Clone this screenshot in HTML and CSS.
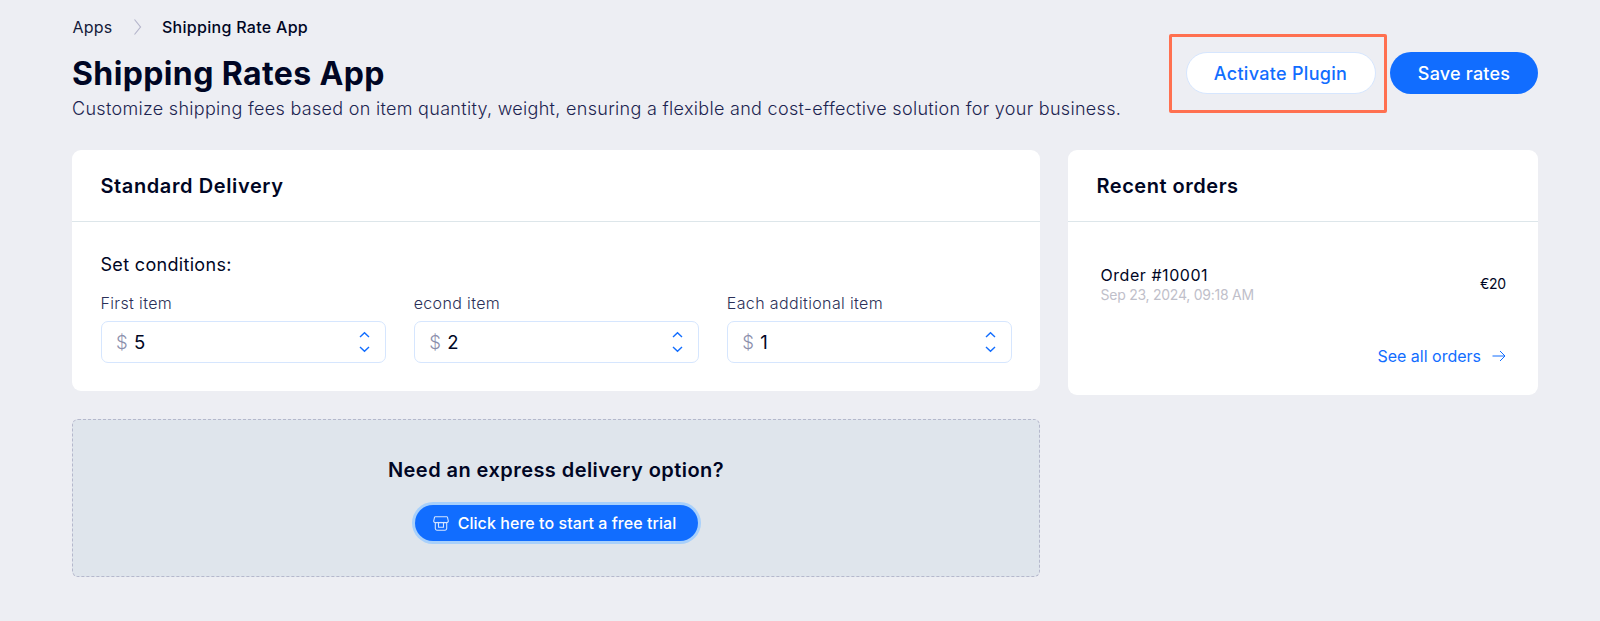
FILE: index.html
```
<!DOCTYPE html>
<html lang="en">
<head>
<meta charset="utf-8">
<title>Shipping Rates App</title>
<link rel="stylesheet" href="styles.css">
</head>
<body>
<main class="page">
  <header class="header">
    <div class="intro">
      <nav class="crumbs">
        <span class="crumb">Apps</span>
        <svg class="crumb-sep" width="9" height="18" viewBox="0 0 9 18"><path d="M1.500 1.500 7.500 9 1.500 16.500"/></svg>
        <span class="crumb-current">Shipping Rate App</span>
      </nav>
      <h1 class="title">Shipping Rates App</h1>
      <p class="subtitle">Customize shipping fees based on item quantity, weight, ensuring a flexible and cost-effective solution for your business.</p>
    </div>
    <div class="actions">
      <div class="highlight"><button class="btn btn-secondary">Activate Plugin</button></div>
      <button class="btn btn-primary">Save rates</button>
    </div>
  </header>

  <div class="columns">
    <div class="main-col">
      <section class="card">
        <h2 class="card-title standard">Standard Delivery</h2>
        <div class="conditions">
          <p class="conditions-title">Set conditions:</p>
          <div class="fields">
            <div class="field">
              <span class="label">First item</span>
              <div class="input"><span class="currency">$</span><span class="value">5</span>
                <svg class="stepper" width="11" height="22" viewBox="0 0 11 22"><path d="M1 6 5.500 1.700 10 6M1 16 5.500 20.300 10 16"/></svg></div>
            </div>
            <div class="field">
              <span class="label">econd item</span>
              <div class="input"><span class="currency">$</span><span class="value">2</span>
                <svg class="stepper" width="11" height="22" viewBox="0 0 11 22"><path d="M1 6 5.500 1.700 10 6M1 16 5.500 20.300 10 16"/></svg></div>
            </div>
            <div class="field">
              <span class="label">Each additional item</span>
              <div class="input"><span class="currency">$</span><span class="value">1</span>
                <svg class="stepper" width="11" height="22" viewBox="0 0 11 22"><path d="M1 6 5.500 1.700 10 6M1 16 5.500 20.300 10 16"/></svg></div>
            </div>
          </div>
        </div>
      </section>
      <section class="promo">
        <h2 class="promo-title">Need an express delivery option?</h2>
        <button class="trial">
          <svg class="store" width="16" height="15" viewBox="0 0 16 15"><path d="M2.300.8h11.400q.6 0 .8.600l.8 3.600c0 1-.6 1.600-1.600 1.600H2.300C1.300 6.600.7 6 .7 5l.8-3.600q.2-.6.8-.6ZM2.300 6.600v6q0 1.600 1.600 1.600h8.200q1.600 0 1.600-1.600v-6M5.500 6.800v4.400h5V6.800M4.300 6q1 1.500 2 0M7 6q1 1.500 2 0M9.700 6q1 1.500 2 0"/></svg>
          <span class="trial-label">Click here to start a free trial</span>
        </button>
      </section>
    </div>
    <aside class="card orders">
      <h2 class="card-title recent">Recent orders</h2>
      <div class="order">
        <div class="order-info">
          <div class="order-name">Order #10001</div>
          <div class="order-date">Sep 23, 2024, 09:18 AM</div>
        </div>
        <div class="order-total">€20</div>
      </div>
      <a class="all-orders">See all orders
        <svg class="arrow" width="14" height="12" viewBox="0 0 14 12"><path d="M.5 6h12.500M8 1l5 5-5 5"/></svg></a>
    </aside>
  </div>
</main>
</body>
</html>
```
FILE: styles.css
```
* { box-sizing: border-box; }
body { margin: 0; background: #edeef3; color: #000624; font-family: Inter, "Liberation Sans", sans-serif; font-size: 16px; white-space: nowrap; }
h1, h2, p { margin: 0; }
button { border: 0; font-family: inherit; padding: 0; }
svg { display: block; fill: none; flex: none; }
.page { width: 1600px; height: 621px; padding: 17px 62px 0 72px; overflow: hidden; }
.header { display: flex; justify-content: space-between; height: 133px; }
.crumbs { display: flex; align-items: center; height: 20px; padding-left: .5px; }
.crumb { letter-spacing: .2px; color: #141a3a; }
.crumb-current { letter-spacing: .3px; font-weight: 500; }
.crumb-sep { margin: 0 19.5px 0 21px; stroke: #b5b5cb; stroke-width: 1.2; }
.title { font-size: 32px; line-height: 40px; font-weight: 650; letter-spacing: .38px; margin-top: 17px; }
.subtitle { font-size: 18px; line-height: 24px; font-weight: 330; letter-spacing: .3px; color: #1c2450; margin-top: 3px; }
.actions { display: flex; flex: none; align-items: flex-start; gap: 3px; padding-top: 17px; }
.highlight { width: 218px; height: 79px; border: 3.5px solid #ff7050; border-radius: 2px; padding: 15px 0 0 13.5px; }
.btn { height: 42px; border-radius: 21px; font-size: 18px; display: flex; align-items: center; justify-content: center; }
.btn-secondary { width: 190px; background: #fff; border: 1px solid #d6e6fe; color: #116dff; font-weight: 450; letter-spacing: .3px; }
.btn-primary { width: 148px; margin-top: 18px; background: #116dff; color: #fff; font-weight: 500; letter-spacing: .2px; }
.columns { display: grid; grid-template-columns: 968px 470px; gap: 28px; align-items: start; }
.card { background: #fff; border-radius: 9px; }
.main-col { display: grid; gap: 28px; }
.card-title { height: 72px; border-bottom: 1px solid #dde6ea; padding: 0 28.5px; line-height: 72px; font-size: 20px; font-weight: 600; }
.standard { letter-spacing: .6px; }
.recent { letter-spacing: .52px; }
.conditions { height: 169px; padding: 31px 28px 0 28.5px; }
.conditions-title { font-size: 18px; line-height: 24px; letter-spacing: .32px; }
.fields { display: grid; grid-template-columns: repeat(3, 1fr); gap: 28px; margin-top: 16px; }
.label { display: block; line-height: 20px; font-weight: 350; letter-spacing: .36px; color: #2b3058; }
.input { display: flex; align-items: center; height: 42px; margin-top: 8px; padding: 0 15px 0 14.5px; border: 1px solid #d6e6fe; border-radius: 7px; font-size: 18.500px; }
.currency { color: #8c8fac; width: 18px; font-weight: 300; }
.stepper { margin-left: auto; stroke: #116dff; stroke-width: 1.4; }
.promo { height: 158px; border: 1px dashed #b5b8cc; border-radius: 6px; background: #dfe5ec; display: flex; flex-direction: column; align-items: center; padding-top: 36px; }
.promo-title { font-size: 20px; line-height: 28px; font-weight: 600; letter-spacing: .44px; }
.trial { display: flex; align-items: center; justify-content: center; gap: 9px; margin-top: 21px; width: 283px; height: 36px; padding-right: 3px; border-radius: 18px; background: #116dff; box-shadow: 0 0 0 3px #a8d0fb; color: #fff; font-size: 16px; font-weight: 450; letter-spacing: .06px; }
.store { stroke: #d5e5ff; stroke-width: 1.1; }
.orders { height: 245px; }
.order { display: flex; justify-content: space-between; align-items: center; margin: 42px 32px 0 32.5px; }
.order-name { line-height: 22px; letter-spacing: .55px; }
.order-date { font-size: 14px; line-height: 18px; letter-spacing: -.25px; color: #bfc0ca; }
.order-total { font-size: 14px; line-height: 17px; letter-spacing: -.2px; padding-bottom: 1px; }
.all-orders { display: flex; justify-content: flex-end; align-items: center; gap: 11px; margin: 42px 32px 0; color: #116dff; line-height: 20px; }
.arrow { stroke: #116dff; stroke-width: 1; }
```
